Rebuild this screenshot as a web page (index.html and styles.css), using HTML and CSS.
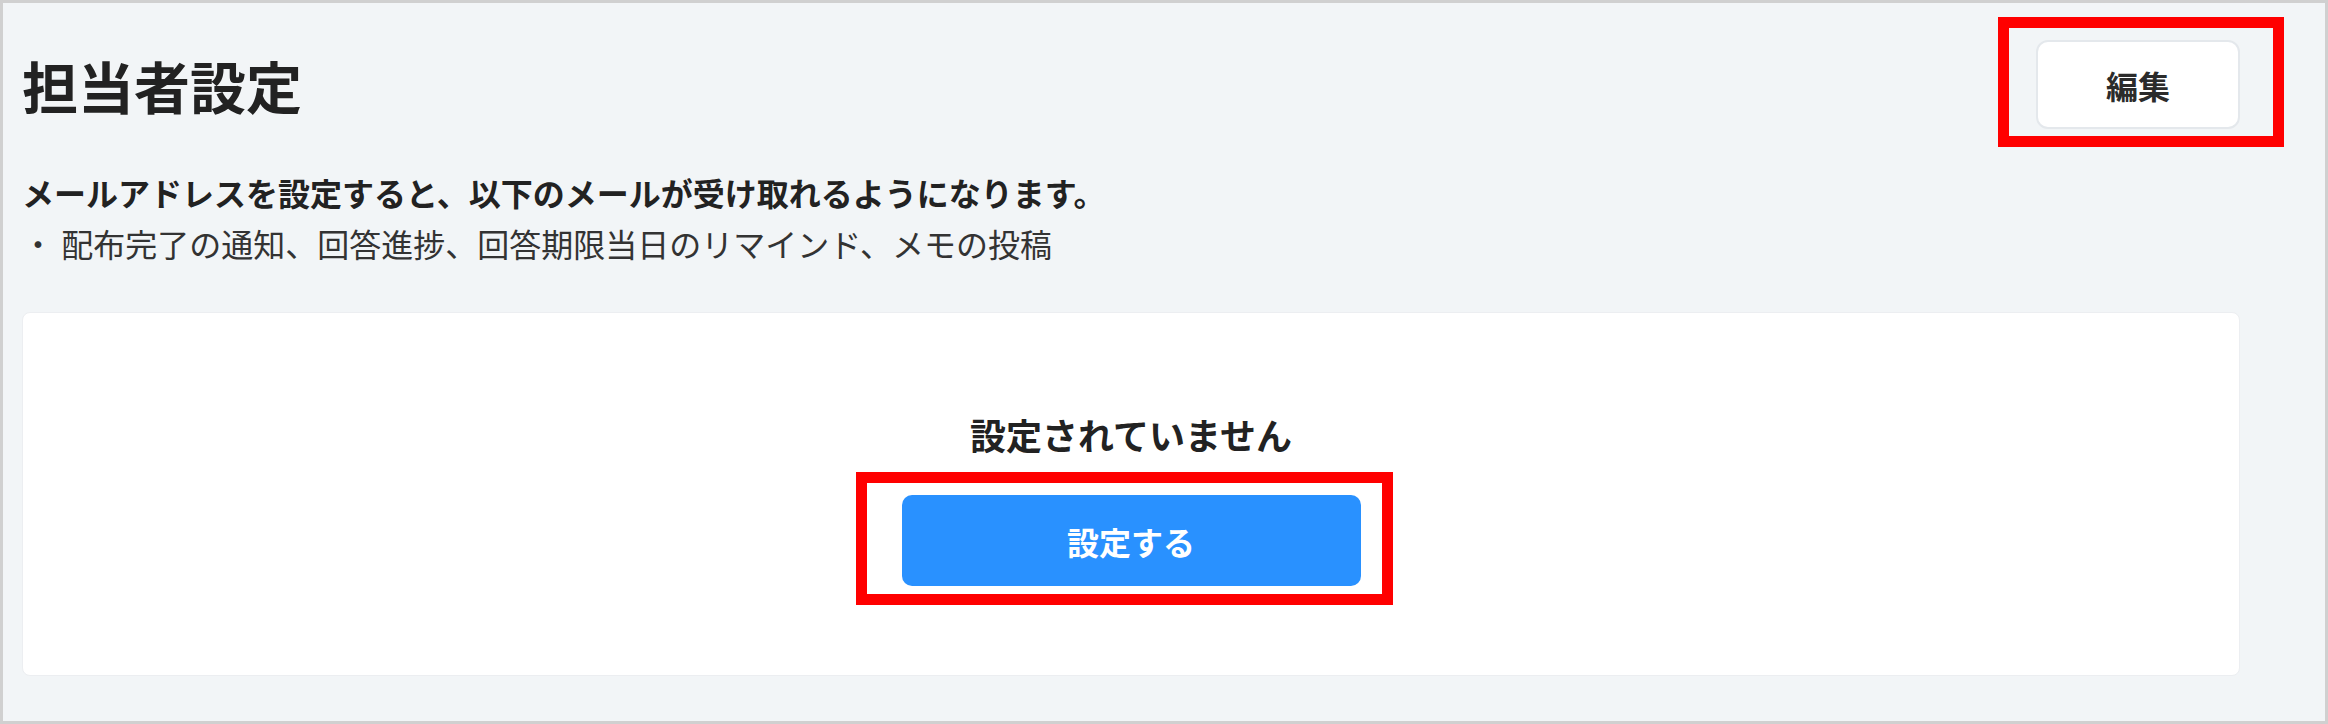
FILE: index.html
```html
<!DOCTYPE html>
<html lang="ja">
<head>
  <meta charset="UTF-8">
  <title>担当者設定</title>
  <link rel="stylesheet" href="styles.css">
</head>
<body>
  <div class="panel">
    <div class="panel-header">
      <h1 class="panel-title">担当者設定</h1>
      <div class="mark-wrap">
        <button class="edit-button">編集</button>
        <span class="mark mark-edit"></span>
      </div>
    </div>

    <div class="description">
      <p class="description-lead">メールアドレスを設定すると、以下のメールが受け取れるようになります。</p>
      <p class="description-item">・ 配布完了の通知、回答進捗、回答期限当日のリマインド、メモの投稿</p>
    </div>

    <div class="card">
      <p class="empty-text">設定されていません</p>
      <div class="mark-wrap">
        <button class="setup-button">設定する</button>
        <span class="mark mark-setup"></span>
      </div>
    </div>
  </div>
</body>
</html>
```

FILE: styles.css
```css
html, body {
  margin: 0;
  padding: 0;
}
body {
  font-family: "Noto Sans CJK JP", "Noto Sans", sans-serif;
  color: #222;
  background-color: #fff;
}
.panel {
  box-sizing: border-box;
  width: 2328px;
  height: 724px;
  border: 3px solid #d0d0d0;
  background-color: #f2f5f7;
  padding: 37px 85px 0 19px;
}
.panel-header {
  display: flex;
  align-items: center;
  justify-content: space-between;
  height: 89px;
}
.panel-title {
  margin: 0;
  font-size: 56px;
  font-weight: bold;
  line-height: 1;
  color: #222;
}
.mark-wrap {
  position: relative;
  display: inline-block;
}
.mark {
  position: absolute;
  border: 11px solid #ff0000;
  pointer-events: none;
}
.mark-edit {
  left: -38px;
  top: -23px;
  right: -44px;
  bottom: -18px;
}
.mark-setup {
  left: -46px;
  top: -23px;
  right: -32px;
  bottom: -19px;
}
button {
  font-family: inherit;
  font-weight: bold;
  font-size: 32px;
  cursor: pointer;
  display: block;
}
.edit-button {
  box-sizing: border-box;
  width: 204px;
  height: 89px;
  background-color: #fff;
  border: 2px solid #e4e8ec;
  border-radius: 12px;
  color: #2b2b2b;
}
.description {
  margin-top: 38px;
  font-size: 32px;
  line-height: 51px;
}
.description p {
  margin: 0;
}
.description-lead {
  font-weight: bold;
  color: #222;
}
.description-item {
  color: #333;
}
.card {
  box-sizing: border-box;
  margin-top: 43px;
  height: 364px;
  background-color: #fff;
  border: 1px solid #eceef1;
  border-radius: 8px;
  padding-top: 94px;
  display: flex;
  flex-direction: column;
  align-items: center;
}
.empty-text {
  margin: 0 0 34px;
  font-size: 36px;
  font-weight: bold;
  line-height: 54px;
  color: #222;
}
.setup-button {
  width: 459px;
  height: 91px;
  background-color: #2991ff;
  border: none;
  border-radius: 10px;
  color: #fff;
}
```
